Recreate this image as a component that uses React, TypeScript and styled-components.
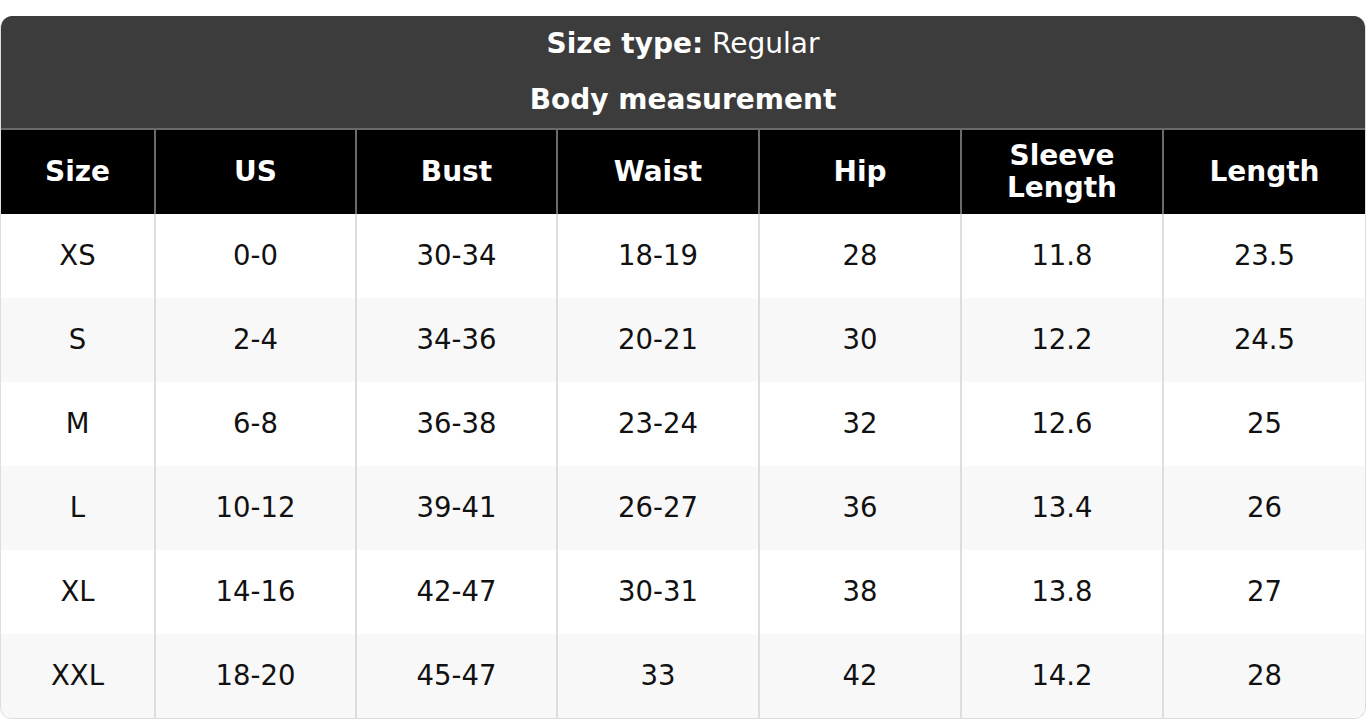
import React from "react";
import styled, { createGlobalStyle } from "styled-components";

const GlobalStyle = createGlobalStyle`
  html, body {
    margin: 0;
    padding: 0;
    background: #ffffff;
  }
  body {
    font-family: "DejaVu Sans", "Liberation Sans", sans-serif;
    color: #111111;
  }
`;

const Page = styled.div`
  padding-top: 16px;
  width: 1366px;
`;

const Card = styled.div`
  border-radius: 12px;
  overflow: hidden;
  border: 1px solid #dddddd;
  border-top: none;
  box-sizing: border-box;
  width: 100%;
`;

const Banner = styled.div`
  background: #3c3c3c;
  color: #ffffff;
  border-bottom: 2px solid #6a6a6a;
`;

const BannerLine = styled.div<{ $bold?: boolean }>`
  height: 56px;
  padding-bottom: 2px;
  display: flex;
  align-items: center;
  justify-content: center;
  font-size: 28px;
  font-weight: ${(p) => (p.$bold ? 700 : 400)};
  box-sizing: border-box;
  white-space: pre;
`;

const Label = styled.span`
  font-weight: 700;
`;

const Table = styled.table`
  width: 100%;
  border-collapse: collapse;
  table-layout: fixed;
`;

const HeadCell = styled.th`
  background: #000000;
  color: #ffffff;
  height: 84px;
  font-size: 28px;
  font-weight: 700;
  line-height: 32px;
  text-align: center;
  padding: 0 6px;
  border-right: 2px solid #6a6a6a;
  box-sizing: border-box;

  &:last-child {
    border-right: none;
  }
`;

const Row = styled.tr<{ $alt: boolean }>`
  background: ${(p) => (p.$alt ? "#f8f8f8" : "#ffffff")};
`;

const Cell = styled.td`
  height: 84px;
  font-size: 27.5px;
  text-align: center;
  padding: 0 0 2px;
  border-right: 2px solid #dddddd;
  box-sizing: border-box;

  &:last-child {
    border-right: none;
  }
`;

const widths = [154, 201, 201, 202, 202, 202, 202];

const headers = ["Size", "US", "Bust", "Waist", "Hip", "Sleeve Length", "Length"];

const rows = [
  ["XS", "0-0", "30-34", "18-19", "28", "11.8", "23.5"],
  ["S", "2-4", "34-36", "20-21", "30", "12.2", "24.5"],
  ["M", "6-8", "36-38", "23-24", "32", "12.6", "25"],
  ["L", "10-12", "39-41", "26-27", "36", "13.4", "26"],
  ["XL", "14-16", "42-47", "30-31", "38", "13.8", "27"],
  ["XXL", "18-20", "45-47", "33", "42", "14.2", "28"],
];

const SizeChart = () => {
  return (
    <Card>
      <Banner>
        <BannerLine>
          <Label>Size type:</Label> Regular
        </BannerLine>
        <BannerLine $bold>Body measurement</BannerLine>
      </Banner>
      <Table>
        <colgroup>
          {widths.map((w, i) => (
            <col key={i} style={{ width: w }} />
          ))}
        </colgroup>
        <thead>
          <tr>
            {headers.map((h) => (
              <HeadCell key={h}>{h}</HeadCell>
            ))}
          </tr>
        </thead>
        <tbody>
          {rows.map((r, i) => (
            <Row key={r[0]} $alt={i % 2 === 1}>
              {r.map((v, j) => (
                <Cell key={j}>{v}</Cell>
              ))}
            </Row>
          ))}
        </tbody>
      </Table>
    </Card>
  );
};

export default function App() {
  return (
    <Page>
      <GlobalStyle />
      <SizeChart />
    </Page>
  );
}
